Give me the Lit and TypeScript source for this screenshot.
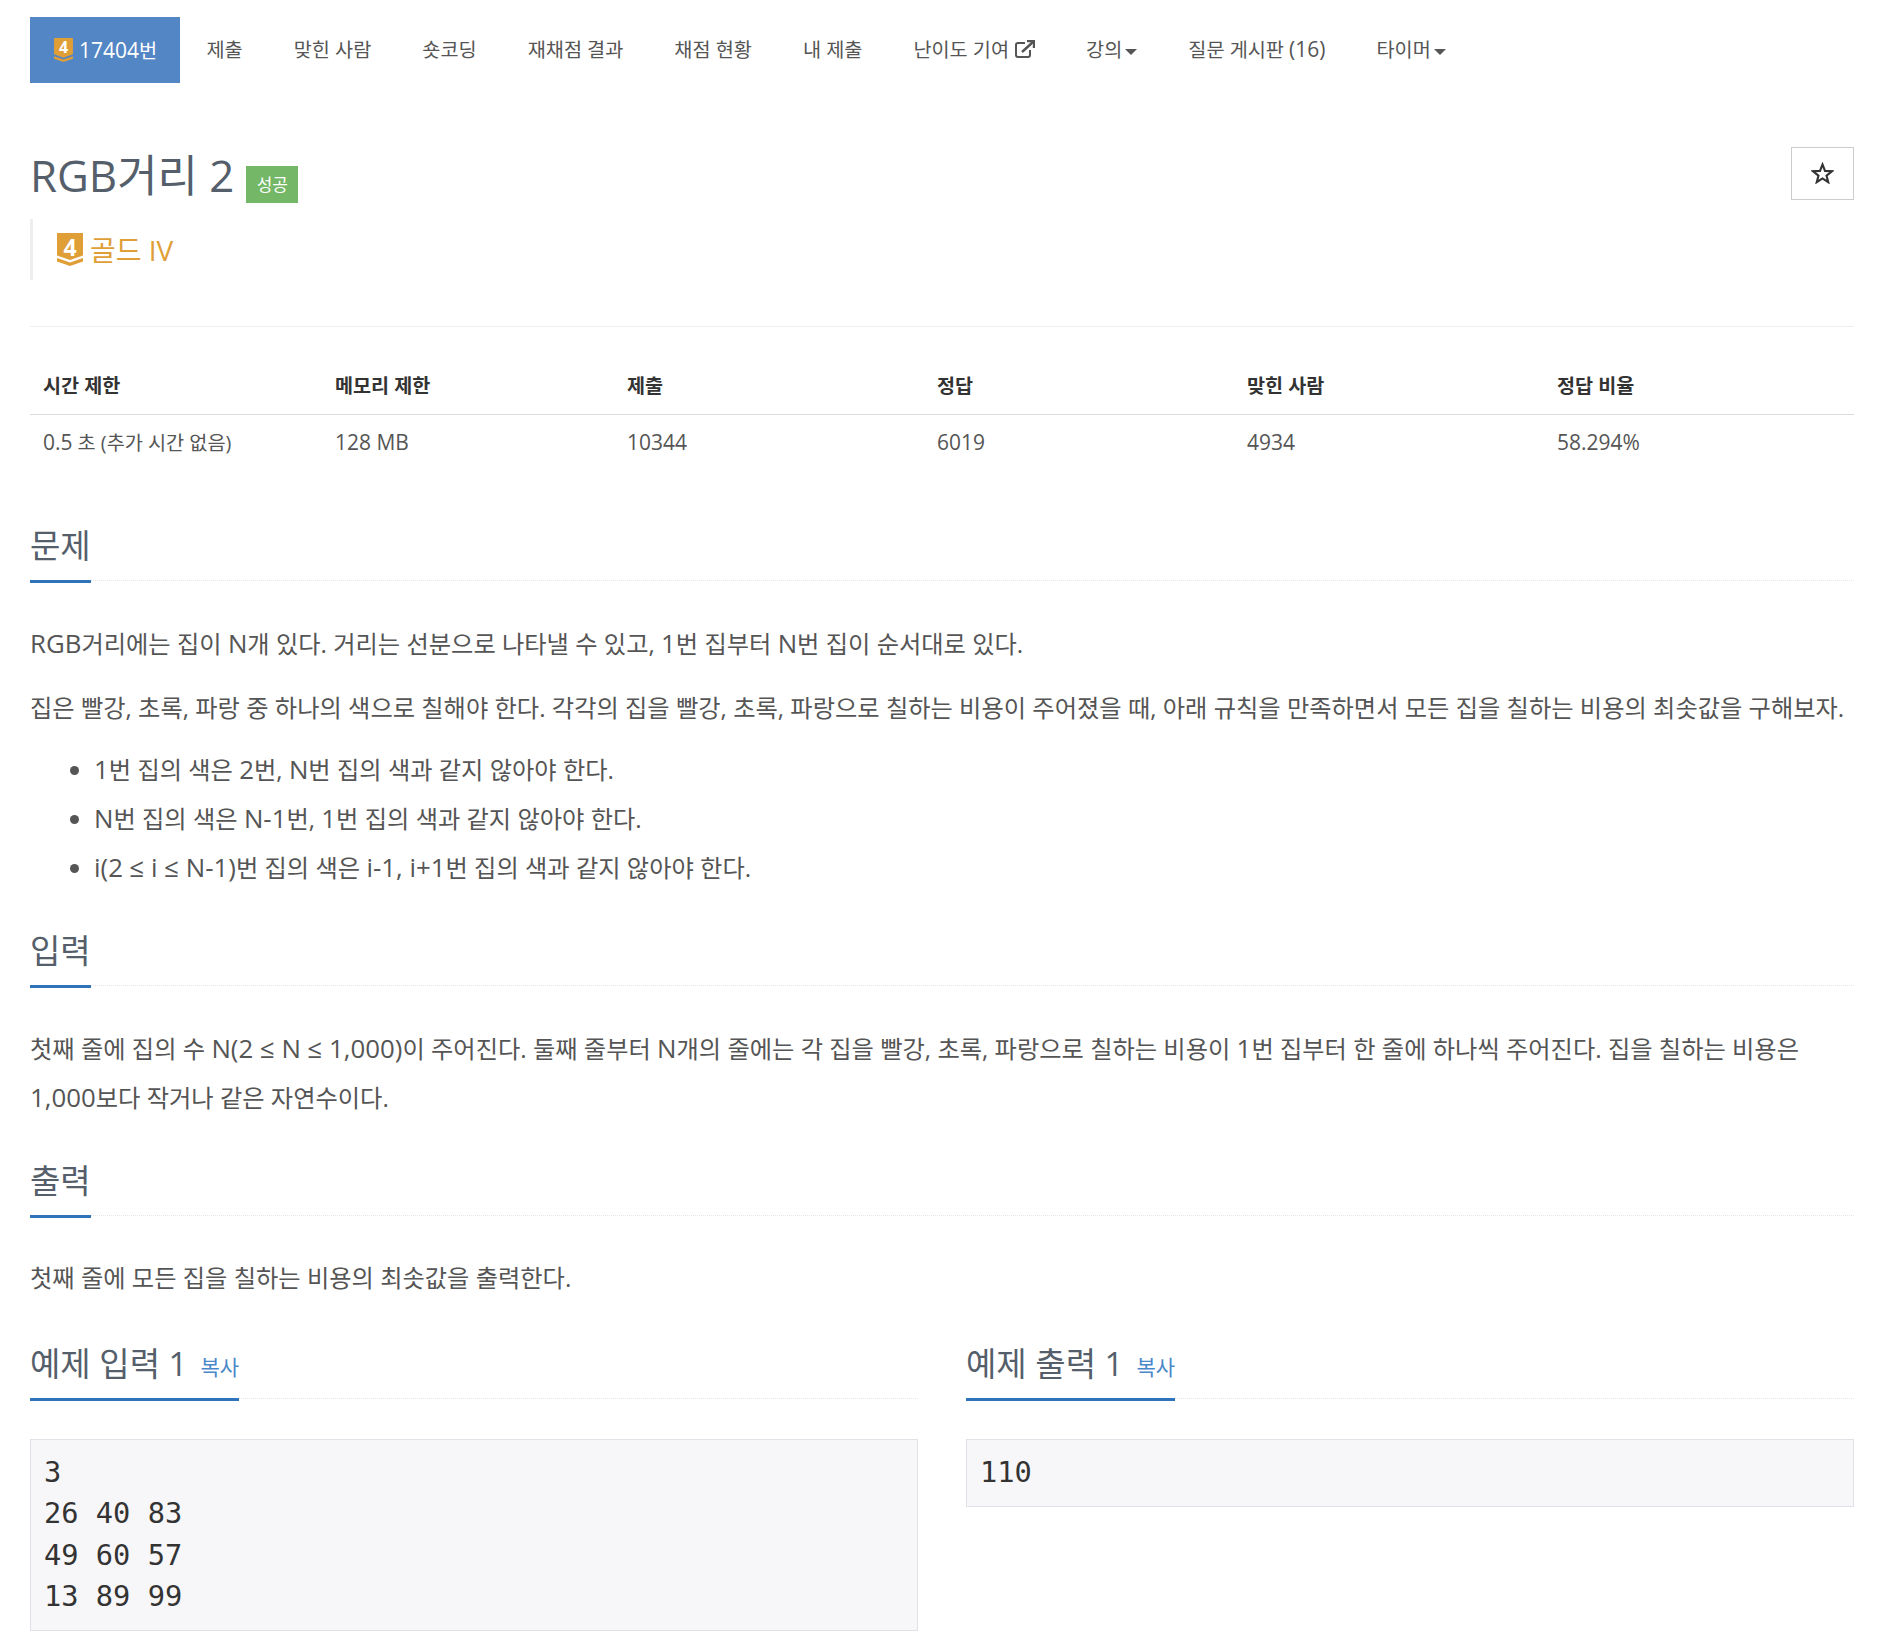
import { LitElement, html, css } from 'lit';
import { customElement } from 'lit/decorators.js';

// latin runs render a bit larger than the hangul around them in the reference
const mix = (text: string) =>
  text
    .split(/([A-Za-z0-9()][A-Za-z0-9().,+%≤ -]*[A-Za-z0-9().,+%]|[A-Za-z0-9])/)
    .map((part, i) => (i % 2 ? html`<span class="l">${part}</span>` : part));

const tierBadge = (cls: string) => html`
  <span class="badge ${cls}">
    <svg viewBox="0 0 26 33">
      <path d="M0 0H26V22.5L13 27L0 22.5Z" fill="#e09e37"></path>
      <path d="M0 25L13 29.6L26 25V28.4L13 33L0 28.4Z" fill="#e09e37"></path>
    </svg>
    <span class="num">4</span>
  </span>
`;

const tabs = [
  ['제출', ''],
  ['맞힌 사람', ''],
  ['숏코딩', ''],
  ['재채점 결과', ''],
  ['채점 현황', ''],
  ['내 제출', ''],
  ['난이도 기여', 'ext'],
  ['강의', 'caret'],
  ['질문 게시판 (16)', ''],
  ['타이머', 'caret'],
];

const infoHead = ['시간 제한', '메모리 제한', '제출', '정답', '맞힌 사람', '정답 비율'];
const infoRow = ['0.5 초 (추가 시간 없음)', '128 MB', '10344', '6019', '4934', '58.294%'];

@customElement('app-root')
export class AppRoot extends LitElement {
  static styles = css`
    :host {
      display: block;
      box-sizing: border-box;
      width: 1888px;
      height: 1652px;
      padding: 17px 34px 0 30px;
      background: #fff;
      color: #555;
      font-family: 'Open Sans', 'Noto Sans CJK KR', sans-serif;
      overflow: hidden;
    }

    .l {
      font-size: 1.065em;
    }

    .badge {
      position: relative;
      display: block;
      flex: none;
    }

    .badge svg {
      display: block;
      width: 100%;
      height: 100%;
    }

    .num {
      position: absolute;
      top: 0;
      left: 0;
      right: 0;
      text-align: center;
      color: #fff;
      font-weight: 700;
    }

    .nav-badge {
      width: 19px;
      height: 24px;
    }

    .nav-badge .num {
      font-size: 16px;
      line-height: 19px;
    }

    .tier-badge {
      width: 26px;
      height: 33px;
      margin-top: 2px;
    }

    .tier-badge .num {
      font-size: 23px;
      line-height: 28px;
    }

    .tabs {
      display: flex;
      height: 66px;
      font-size: 19.7px;
      line-height: 28px;
    }

    .tab {
      display: flex;
      align-items: center;
      padding: 0 25.5px 1px;
      color: #555;
      white-space: nowrap;
    }

    .tab.active {
      width: 150px;
      box-sizing: border-box;
      padding: 0 0 0 24px;
      margin-right: 1px;
      background: #5386c5;
      color: #fff;
      gap: 6px;
    }

    .ext {
      width: 20px;
      height: 18px;
      margin-left: 6px;
      margin-top: -2px;
    }

    .caret {
      width: 0;
      height: 0;
      margin-left: 3px;
      margin-top: 4px;
      border-left: 6px solid transparent;
      border-right: 6px solid transparent;
      border-top: 6px solid #555;
    }

    .title-row {
      display: flex;
      justify-content: space-between;
      margin-top: 71px;
    }

    .title {
      display: flex;
      align-items: center;
      height: 38px;
      font-size: 43.8px;
      font-weight: 400;
      color: #555f6b;
      white-space: nowrap;
    }

    .label {
      display: block;
      margin: 22px 0 0 12px;
      padding: 0 10.5px;
      height: 37px;
      line-height: 37px;
      background: #73b767;
      color: #fff;
      font-size: 17px;
    }

    .star {
      display: flex;
      align-items: center;
      justify-content: center;
      box-sizing: border-box;
      width: 63px;
      height: 53px;
      margin-top: -7px;
      border: 1px solid #ccc;
    }

    .star svg {
      width: 23px;
      height: 22px;
      margin-top: -2px;
    }

    .tier {
      display: flex;
      align-items: center;
      gap: 7px;
      height: 61px;
      box-sizing: border-box;
      margin-top: 19px;
      padding: 0 0 2px 24px;
      border-left: 3px solid #eee;
      color: #e09e37;
      font-size: 28px;
    }

    .page-rule {
      height: 1px;
      margin-top: 46px;
      background: #eee;
    }

    .info {
      display: grid;
      grid-template-columns: 292px 292px 310px 310px 310px 310px;
      margin: 31px 0 47px;
      color: #333;
    }

    .info div {
      padding-left: 13px;
    }

    .info .th {
      box-sizing: border-box;
      height: 57px;
      line-height: 56px;
      font-size: 19.6px;
      font-weight: 700;
      border-bottom: 1px solid #ddd;
    }

    .info .td {
      height: 57px;
      line-height: 55px;
      font-size: 19.7px;
      color: #555;
    }

    .head {
      height: 61px;
      border-bottom: 1px dotted #e6e6e6;
      margin-top: 32px;
      font-size: 33px;
      color: #555f6b;
    }

    .head .t {
      display: inline-flex;
      align-items: flex-start;
      gap: 13px;
      height: 61px;
      line-height: 54px;
      border-bottom: 3px solid #2f74ba;
      white-space: nowrap;
    }

    .copy {
      font-size: 21px;
      color: #4a88c9;
      padding-top: 3px;
    }

    .text {
      margin-top: 38px;
      font-size: 24.26px;
      line-height: 48px;
      color: #555;
    }

    .text p {
      margin: 0 0 16px;
    }

    .text ul {
      margin: -3px 0 0;
      padding: 0 0 0 64px;
    }

    .samples {
      display: grid;
      grid-template-columns: 888px 888px;
      gap: 48px;
      margin-top: 35px;
    }

    .samples .head {
      margin-top: 0;
    }

    pre {
      box-sizing: border-box;
      margin: 40px 0 0;
      padding: 12px 13px 13px;
      border: 1px solid #e1e1e8;
      background: #f7f7f9;
      color: #333;
      font-family: 'DejaVu Sans Mono', monospace;
      font-size: 28.7px;
      line-height: 41.3px;
    }
  `;

  private section(title: string, copy = false) {
    return html`
      <div class="head">
        <span class="t">${title}${copy ? html`<span class="copy">복사</span>` : ''}</span>
      </div>
    `;
  }

  render() {
    return html`
      <nav class="tabs">
        <div class="tab active">${tierBadge('nav-badge')}<span>${mix('17404')}번</span></div>
        ${tabs.map(
          ([name, extra]) => html`
            <div class="tab">
              <span>${mix(name)}</span>
              ${extra === 'caret' ? html`<span class="caret"></span>` : ''}
              ${extra === 'ext'
                ? html`<svg class="ext" viewBox="0 0 20 18" fill="none" stroke="#555" stroke-width="2">
                    <path d="M15 10V15A2 2 0 0 1 13 17H3A2 2 0 0 1 1 15V5A2 2 0 0 1 3 3H10"></path>
                    <path d="M7 12L18 2M12 1H19V8" stroke-width="2.4"></path>
                  </svg>`
                : ''}
            </div>
          `,
        )}
      </nav>

      <div class="title-row">
        <div class="title">RGB거리 2<span class="label">성공</span></div>
        <div class="star">
          <svg viewBox="0 0 24 23" fill="none" stroke="#333" stroke-width="2.2">
            <path d="M12 2.6L14.6 9.3L21.8 9.7L16.2 14.2L18 21.1L12 17.2L6 21.1L7.8 14.2L2.2 9.7L9.4 9.3Z"></path>
          </svg>
        </div>
      </div>
      <div class="tier">${tierBadge('tier-badge')}<span>골드 IV</span></div>
      <div class="page-rule"></div>

      <div class="info">
        ${infoHead.map((h) => html`<div class="th">${h}</div>`)}
        ${infoRow.map((c) => html`<div class="td">${mix(c)}</div>`)}
      </div>

      ${this.section('문제')}
      <div class="text">
        <p>${mix('RGB거리에는 집이 N개 있다. 거리는 선분으로 나타낼 수 있고, 1번 집부터 N번 집이 순서대로 있다.')}</p>
        <p>집은 빨강, 초록, 파랑 중 하나의 색으로 칠해야 한다. 각각의 집을 빨강, 초록, 파랑으로 칠하는 비용이 주어졌을 때, 아래 규칙을 만족하면서 모든 집을 칠하는 비용의 최솟값을 구해보자.</p>
        <ul>
          <li>${mix('1번 집의 색은 2번, N번 집의 색과 같지 않아야 한다.')}</li>
          <li>${mix('N번 집의 색은 N-1번, 1번 집의 색과 같지 않아야 한다.')}</li>
          <li>${mix('i(2 ≤ i ≤ N-1)번 집의 색은 i-1, i+1번 집의 색과 같지 않아야 한다.')}</li>
        </ul>
      </div>

      ${this.section('입력')}
      <div class="text">
        <p>${mix('첫째 줄에 집의 수 N(2 ≤ N ≤ 1,000)이 주어진다. 둘째 줄부터 N개의 줄에는 각 집을 빨강, 초록, 파랑으로 칠하는 비용이 1번 집부터 한 줄에 하나씩 주어진다. 집을 칠하는 비용은')}<br />${mix('1,000보다 작거나 같은 자연수이다.')}</p>
      </div>

      ${this.section('출력')}
      <div class="text">
        <p>첫째 줄에 모든 집을 칠하는 비용의 최솟값을 출력한다.</p>
      </div>

      <div class="samples">
        <div>
          ${this.section('예제 입력 1', true)}
          <pre>3
26 40 83
49 60 57
13 89 99</pre>
        </div>
        <div>
          ${this.section('예제 출력 1', true)}
          <pre>110</pre>
        </div>
      </div>
    `;
  }
}
